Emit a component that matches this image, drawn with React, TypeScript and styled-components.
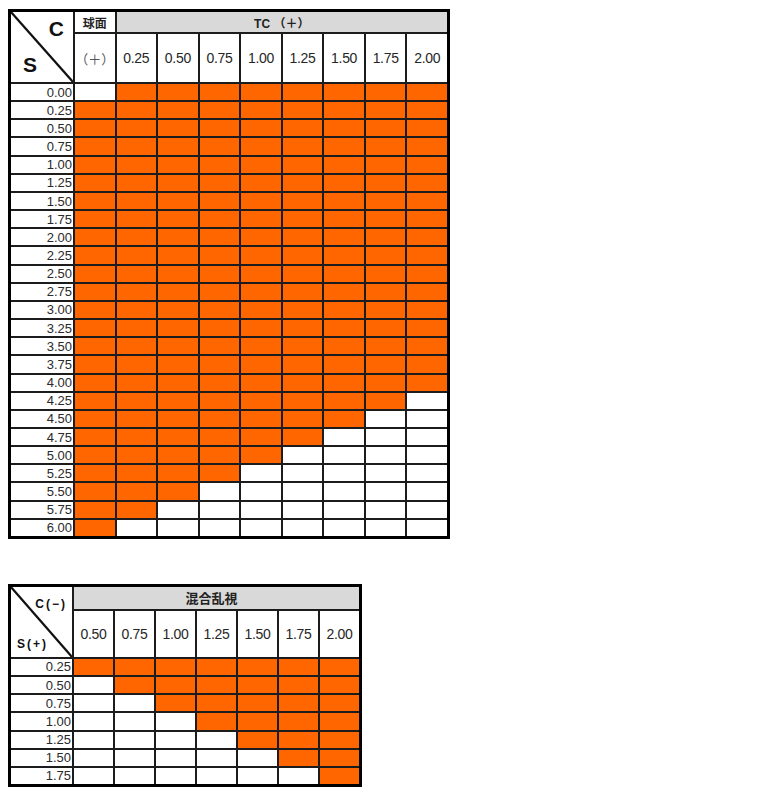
import styled, { createGlobalStyle } from "styled-components";

const GlobalStyle = createGlobalStyle`
  body {
    margin: 8px;
    background: #ffffff;
    font-family: "Liberation Sans", Arial, "Noto Sans CJK JP", sans-serif;
  }
`;

const ORANGE = "#ff6600";
const GRAY = "#d9d9d9";
const LINE = "#1c1c1c";

const Page = styled.div`
  display: flex;
  flex-direction: column;
  align-items: flex-start;
  gap: 45px;
  padding-top: 1px;
`;

const Grid = styled.div<{ $width: number; $label: number; $cols: number; $rows: string }>`
  display: grid;
  width: ${(p) => p.$width}px;
  box-sizing: border-box;
  border: 3px solid #000;
  background: ${LINE};
  gap: 2px;
  grid-template-columns: ${(p) => p.$label}px repeat(${(p) => p.$cols}, minmax(0, 1fr));
  grid-template-rows: ${(p) => p.$rows};
`;

const Cell = styled.div<{ $fill?: "orange" | "white" | "gray"; $span?: number }>`
  background: ${(p) => (p.$fill === "orange" ? ORANGE : p.$fill === "gray" ? GRAY : "#fff")};
  grid-column: ${(p) => (p.$span ? `span ${p.$span}` : "auto")};
  display: flex;
  align-items: center;
  justify-content: center;
  font-size: 13px;
  color: #2a2a2a;
  white-space: nowrap;
  overflow: hidden;
`;

const ColHead = styled(Cell)`
  font-size: 14px;
  letter-spacing: -0.3px;
  color: #262626;
`;

const HeadText = styled(Cell)<{ $size?: number; $shift?: number }>`
  font-weight: bold;
  font-size: ${(p) => p.$size ?? 12}px;
  padding-right: ${(p) => p.$shift ?? 0}px;
  color: #222;
  font-family: "Liberation Sans", "Noto Sans CJK JP", sans-serif;
`;

const RowLabel = styled(Cell)`
  justify-content: flex-end;
  padding-right: 1px;
  font-size: 13px;
  line-height: 1;
`;

const Corner = styled.div<{ $pad: string }>`
  grid-row: span 2;
  position: relative;
  background: #fff;
  display: flex;
  flex-direction: column;
  justify-content: space-between;
  padding: ${(p) => p.$pad};
  overflow: hidden;
`;

const Diagonal = styled.svg`
  position: absolute;
  inset: 0;
  width: 100%;
  height: 100%;
`;

const CornerText = styled.span<{ $size: number; $end?: boolean }>`
  position: relative;
  align-self: ${(p) => (p.$end ? "flex-end" : "flex-start")};
  font-weight: bold;
  font-size: ${(p) => p.$size}px;
  line-height: 1;
  letter-spacing: ${(p) => (p.$size < 15 ? "2px" : "0")};
  color: #111;
`;

const Muted = styled(Cell)`
  color: #555;
  font-size: 13px;
  font-family: "Liberation Sans", "Noto Sans CJK JP", sans-serif;
`;

const fmt = (n: number) => n.toFixed(2);

const DiagonalLine = () => (
  <Diagonal viewBox="0 0 100 100" preserveAspectRatio="none">
    <line x1="0" y1="0" x2="100" y2="100" stroke="#111" strokeWidth="2.2" vectorEffect="non-scaling-stroke" />
  </Diagonal>
);

const tcCols = Array.from({ length: 8 }, (_, j) => (j + 1) * 0.25);
const sphRows = Array.from({ length: 25 }, (_, i) => i);

const Row9 = ({ i }: { i: number }) => (
  <>
    <RowLabel>{fmt(i * 0.25)}</RowLabel>
    {Array.from({ length: 9 }, (_, j) => (
      <Cell key={j} $fill={(i > 0 || j > 0) && i + j <= 24 ? "orange" : "white"} />
    ))}
  </>
);

const ToricTable = () => (
  <Grid $width={442} $label={62} $cols={9} $rows="20px 48px repeat(25, 16.17px)">
    <Corner $pad="6px 9px 7px 12px">
      <DiagonalLine />
      <CornerText $size={21} $end>C</CornerText>
      <CornerText $size={21}>S</CornerText>
    </Corner>
    <HeadText>球面</HeadText>
    <HeadText $fill="gray" $span={8}>TC （＋）</HeadText>
    <Muted>（＋）</Muted>
    {tcCols.map((c) => (
      <ColHead key={c}>{fmt(c)}</ColHead>
    ))}
    {sphRows.map((i) => (
      <Row9 key={i} i={i} />
    ))}
  </Grid>
);

const mixCols = Array.from({ length: 7 }, (_, j) => 0.5 + j * 0.25);
const mixRows = Array.from({ length: 7 }, (_, k) => k);

const Row7 = ({ k }: { k: number }) => (
  <>
    <RowLabel>{fmt(0.25 + k * 0.25)}</RowLabel>
    {mixCols.map((_, j) => (
      <Cell key={j} $fill={j >= k ? "orange" : "white"} />
    ))}
  </>
);

const MixedTable = () => (
  <Grid $width={354} $label={61} $cols={7} $rows="22px 46px repeat(7, 16.17px)">
    <Corner $pad="11px 5px 7px 6px">
      <DiagonalLine />
      <CornerText $size={12} $end>C(−)</CornerText>
      <CornerText $size={12}>S(+)</CornerText>
    </Corner>
    <HeadText $fill="gray" $span={7} $size={13} $shift={10}>混合乱視</HeadText>
    {mixCols.map((c) => (
      <ColHead key={c}>{fmt(c)}</ColHead>
    ))}
    {mixRows.map((k) => (
      <Row7 key={k} k={k} />
    ))}
  </Grid>
);

export default function App() {
  return (
    <>
      <GlobalStyle />
      <Page>
        <ToricTable />
        <MixedTable />
      </Page>
    </>
  );
}
